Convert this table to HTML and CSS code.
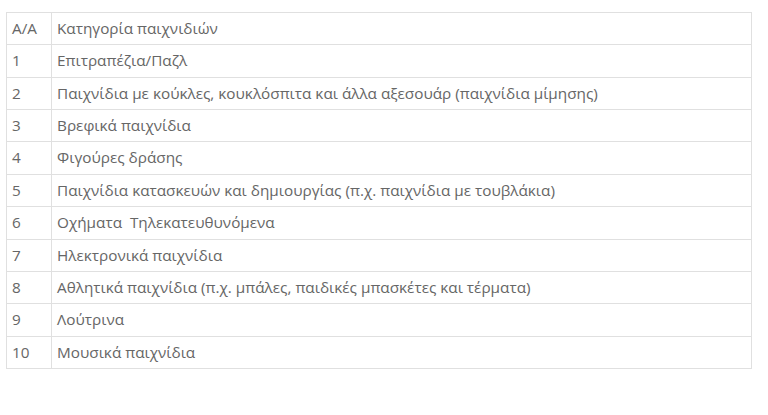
FILE: index.html
```html
<!DOCTYPE html>
<html lang="el">
<head>
<meta charset="utf-8">
<link rel="stylesheet" href="styles.css">
</head>
<body>
<div class="page">
<table class="toys">
<tbody>
<tr><td class="num">A/A</td><td>Κατηγορία παιχνιδιών</td></tr>
<tr><td class="num">1</td><td>Επιτραπέζια/Παζλ</td></tr>
<tr><td class="num">2</td><td>Παιχνίδια με κούκλες, κουκλόσπιτα και άλλα αξεσουάρ (παιχνίδια μίμησης)</td></tr>
<tr><td class="num">3</td><td>Βρεφικά παιχνίδια</td></tr>
<tr><td class="num">4</td><td>Φιγούρες δράσης</td></tr>
<tr><td class="num">5</td><td>Παιχνίδια κατασκευών και δημιουργίας (π.χ. παιχνίδια με τουβλάκια)</td></tr>
<tr><td class="num">6</td><td>Οχήματα &nbsp;Τηλεκατευθυνόμενα</td></tr>
<tr><td class="num">7</td><td>Ηλεκτρονικά παιχνίδια</td></tr>
<tr><td class="num">8</td><td>Αθλητικά παιχνίδια (π.χ. μπάλες, παιδικές μπασκέτες και τέρματα)</td></tr>
<tr><td class="num">9</td><td>Λούτρινα</td></tr>
<tr><td class="num">10</td><td>Μουσικά παιχνίδια</td></tr>
</tbody>
</table>
</div>
</body>
</html>
```
FILE: styles.css
```css
html, body {
  margin: 0;
  padding: 0;
  background: #fff;
}
.page {
  padding: 12px 16px 0 6px;
}
.toys {
  width: 746px;
  border-collapse: collapse;
  font-family: "Open Sans", "Noto Sans", sans-serif;
  font-size: 15.3px;
  color: #666;
}
.toys td {
  border: 1px solid #e0e0e0;
  padding: 6px 5px;
  line-height: 19.36px;
  text-align: left;
  vertical-align: middle;
}
.toys td.num {
  width: 34px;
}
```
